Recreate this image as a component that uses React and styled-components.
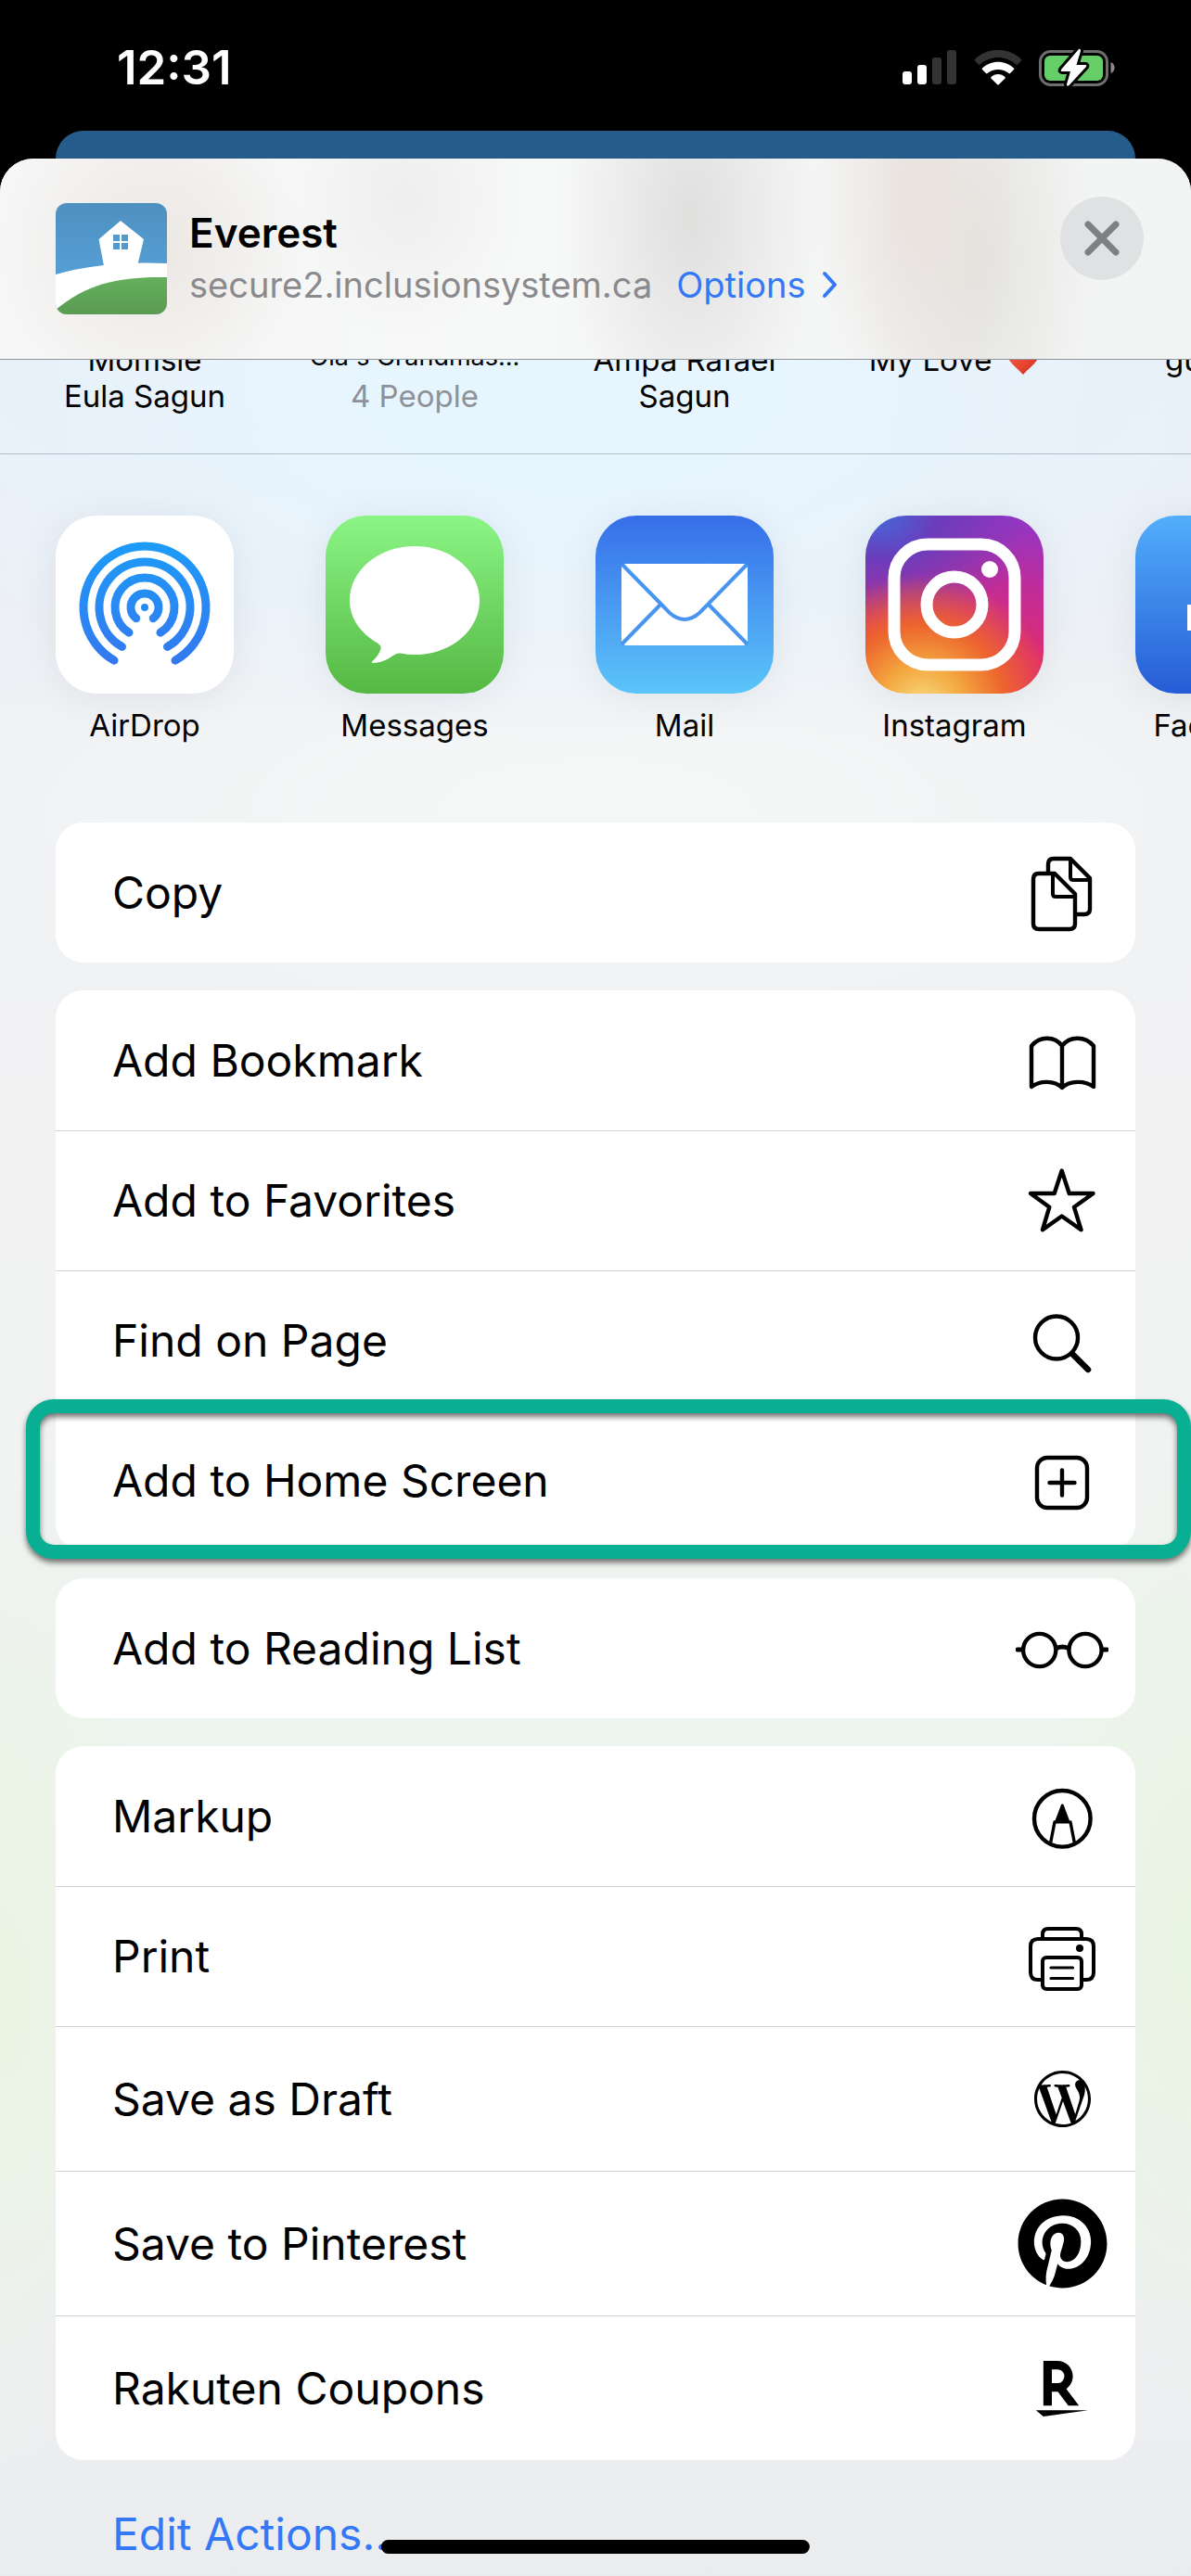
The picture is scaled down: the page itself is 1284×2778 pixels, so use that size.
import React from 'react'
import styled, { createGlobalStyle } from 'styled-components'
import { FaWordpressSimple, FaPinterest } from 'react-icons/fa'
import { SiRakuten } from 'react-icons/si'

const GlobalStyle = createGlobalStyle`
	* {
		box-sizing: border-box;
	}

	body {
		margin: 0;
		background: #000000;
		color: #000000;
		font-family: Inter, 'Liberation Sans', sans-serif;
	}

	button {
		padding: 0;
		border: 0;
		background: none;
		color: inherit;
		font: inherit;
		cursor: pointer;
	}

	ul {
		margin: 0;
		padding: 0;
		list-style: none;
	}

	svg {
		display: block;
		flex-shrink: 0;
	}
`

const Page = styled.div`
	position: relative;
	display: flex;
	flex-direction: column;
	min-height: 100vh;
	overflow: hidden;
`

const StatusBar = styled.div`
	display: flex;
	align-items: center;
	padding: 43px 82px 38px 126px;
	color: #ffffff;
`

const Time = styled.time`
	flex: 1;
	font-size: 51px;
	line-height: 60px;
	font-weight: 600;
`

const StatusIcons = styled.div`
	display: flex;
	align-items: center;
	gap: 18px;
`

const Backdrop = styled.div`
	height: 30px;
	margin: 0 60px;
	border-radius: 30px 30px 0 0;
	background: #265c8b;
`

const Sheet = styled.main`
	flex: 1;
	border-radius: 36px 36px 0 0;
	overflow: hidden;
	background: radial-gradient(ellipse 60% 16% at 48% 9%, #e7f5ff 30%, rgba(231, 245, 255, 0) 100%),
		radial-gradient(ellipse 60% 10% at 50% 27%, #f5f6f6 20%, rgba(245, 246, 246, 0) 100%),
		radial-gradient(ellipse 14% 20% at 0% 76%, #eaf4e2 0%, rgba(234, 244, 226, 0) 100%),
		radial-gradient(ellipse 14% 20% at 100% 74%, #e8f4e2 0%, rgba(232, 244, 226, 0) 100%),
		linear-gradient(
			180deg,
			#e8eef6 0%,
			#e9eff7 12%,
			#eff1f4 24%,
			#f2f2f3 42%,
			#eef4ef 65%,
			#eef3ee 78%,
			#eeeff2 90%,
			#ebecee 100%
		);
`

const Header = styled.header`
	display: flex;
	align-items: flex-start;
	gap: 24px;
	padding: 41px 51px 48px 60px;
	border-bottom: 1px solid #8e959b;
	background: radial-gradient(ellipse 13% 80% at 13% 45%, #ebe7e3 0%, rgba(235, 231, 227, 0) 100%),
		radial-gradient(ellipse 10% 70% at 34% 20%, #eeeeee 0%, rgba(238, 238, 238, 0) 100%),
		radial-gradient(ellipse 11% 120% at 58% 30%, #dfdfde 0%, rgba(223, 223, 222, 0) 100%),
		radial-gradient(ellipse 9% 110% at 77% 20%, #e9e2de 0%, rgba(233, 226, 222, 0) 100%),
		radial-gradient(ellipse 10% 130% at 82% 50%, #e3e2de 0%, rgba(227, 226, 222, 0) 100%),
		linear-gradient(90deg, #f6f6f6 0%, #f7f8f8 40%, #f2f4f3 100%);
`

const SiteIcon = styled.div`
	margin-top: 7px;
	border-radius: 12px;
	overflow: hidden;
`

const SiteInfo = styled.div`
	flex: 1;
	margin-top: 11px;
`

const SiteTitle = styled.h1`
	margin: 0;
	font-size: 44px;
	line-height: 56px;
	font-weight: 600;
`

const SiteLine = styled.div`
	display: flex;
	align-items: center;
	gap: 26px;
	font-size: 38px;
	line-height: 56px;
	color: #8a8a8e;
`

const OptionsButton = styled.button`
	display: flex;
	align-items: center;
	gap: 18px;
	color: #3478f6;
`

const CloseButton = styled.button`
	display: flex;
	align-items: center;
	justify-content: center;
	width: 90px;
	height: 90px;
	border-radius: 50%;
	background: #e0e1e3;
`

const Scroller = styled.ul`
	display: flex;
	gap: 99px;
	padding: 0 60px;
	overflow: hidden;
`

const Contacts = styled(Scroller)`
	height: 102px;
	border-bottom: 1px solid #b3bfc9;
`

const Contact = styled.li`
	flex: 0 0 192px;
	display: flex;
	flex-direction: column;
	align-items: ${props => (props.$cut ? 'flex-start' : 'center')};
	min-width: 0;
	margin-top: -19px;
	padding-left: ${props => (props.$cut ? '32px' : '0')};
	font-size: 33px;
	line-height: 39px;
	white-space: nowrap;
`

const ContactName = styled.span`
	display: flex;
	align-items: center;
	gap: 16px;
`

const GroupName = styled.span`
	margin-bottom: 7px;
	font-size: 27px;
	line-height: 32px;
`

const GroupSize = styled.span`
	color: #8e9298;
`

const Apps = styled(Scroller)`
	padding-top: 66px;
	padding-bottom: 85px;
`

const AppButton = styled.button`
	display: flex;
	flex-direction: column;
	align-items: center;
	gap: 15px;
	width: 192px;
	font-size: 33px;
	line-height: 39px;
`

const AppIcon = styled.span`
	width: 192px;
	height: 192px;
	border-radius: 44px;
	background: ${props => props.$background};
	box-shadow: 0 4px 44px rgba(0, 0, 0, 0.07);
`

const Actions = styled.div`
	display: flex;
	flex-direction: column;
	gap: 30px;
	padding: 0 60px;
`

const Card = styled.ul`
	border-radius: 30px;
	background: #ffffff;
`

const Row = styled.li`
	position: relative;
	height: ${props => (props.$tall ? '156px' : '151px')};

	& + & {
		border-top: 1px solid #d2d2d4;
	}
`

const RowButton = styled.button`
	display: flex;
	align-items: center;
	justify-content: space-between;
	width: 100%;
	height: 100%;
	padding: 0 29px 0 61px;
	font-size: 48px;
	line-height: 60px;
	text-align: left;
`

const IconBox = styled.span`
	display: flex;
	align-items: center;
	justify-content: center;
	width: 100px;
	height: 100px;
`

const Highlight = styled.div`
	position: absolute;
	top: -13px;
	right: -60px;
	bottom: -9px;
	left: -32px;
	z-index: 1;
	border: 15px solid #08af92;
	border-radius: 30px;
	filter: drop-shadow(0 4px 3px rgba(0, 0, 0, 0.55));
	pointer-events: none;
`

const EditButton = styled.button`
	margin: 50px 60px 15px 121px;
	font-size: 48px;
	line-height: 60px;
	color: #3478f6;
`

const HomeIndicator = styled.div`
	position: absolute;
	bottom: 24px;
	left: 50%;
	width: 36%;
	height: 15px;
	border-radius: 8px;
	background: #000000;
	transform: translateX(-50%);
`

const SignalIcon = () => (
	<svg width="59" height="38" viewBox="0 0 59 38" fill="#fff" aria-hidden="true">
		<rect x="0" y="23" width="10" height="14" rx="3" />
		<rect x="16" y="16" width="10" height="21" rx="3" />
		<rect x="32" y="8" width="10" height="29" rx="3" fill="#333" />
		<rect x="48" y="0" width="10" height="37" rx="3" fill="#333" />
	</svg>
)

const WifiIcon = () => (
	<svg width="52" height="38" viewBox="0 0 52 38" fill="#fff" aria-hidden="true">
		<path fill="#333" d="M1 10C15-3.500 37-3.500 51 10C51.500 10.500 51.500 11 51 11.500L47 15.500C46.500 16 46 16 45.500 15.500C34 5.500 18 5.500 6.500 15.500C6 16 5.500 16 5 15.500L1 11.500C.5 11 .5 10.500 1 10Z" />
		<path d="M9 19.500C18.500 10.500 33.500 10.500 43 19.500C43.500 20 43.500 20.500 43 21L39 25C38.500 25.500 38 25.500 37.500 25C31 19.500 21 19.500 14.500 25C14 25.500 13.500 25.500 13 25L9 21C8.500 20.500 8.500 20 9 19.500Z" />
		<path d="M18.500 29C22.500 25 29.500 25 33.500 29C34 29.500 34 30 33.500 30.500L27 37Q26 38 25 37L18.500 30.500C18 30 18 29.500 18.500 29Z" />
	</svg>
)

const BatteryIcon = () => (
	<svg width="82" height="42" viewBox="0 0 82 42" aria-hidden="true">
		<rect x="1.500" y="3.500" width="72" height="36" rx="11" fill="none" stroke="#6e6e70" strokeWidth="3" />
		<path d="M77.500 15C83 17 83 25 77.500 27Z" fill="#8a8a8c" />
		<rect x="6" y="8" width="63" height="27" rx="6" fill="#65ce67" />
		<path
			d="M43 1L24 23Q23 25 25 25H34L30 39Q30 42 32.500 40L51 20Q52 18 50 18H40.500L45 3Q45 0 43 1Z"
			fill="#fff"
			stroke="#000"
			strokeWidth="6"
			paintOrder="stroke"
		/>
	</svg>
)

const HouseIcon = () => (
	<svg width="120" height="120" viewBox="0 0 120 120" aria-hidden="true">
		<defs>
			<linearGradient id="sky" x1="0" y1="0" x2="0" y2="1">
				<stop offset="0" stopColor="#4f90bf" />
				<stop offset="0.65" stopColor="#559fd6" />
			</linearGradient>
			<linearGradient id="grass" x1="0" y1="0" x2="0" y2="1">
				<stop offset="0" stopColor="#65af5c" />
				<stop offset="1" stopColor="#5a9b52" />
			</linearGradient>
		</defs>
		<path d="M0 0H120V120H0Z" fill="url(#sky)" />
		<path d="M0 77Q52 62 120 65V120H0Z" fill="#fff" />
		<path d="M70 19L95 39L88 68H52L46.500 39Z" fill="#fff" />
		<path d="M62 34h7v7h-7zM71 34h7v7h-7zM62 43h7v7h-7zM71 43h7v7h-7z" fill="#529ace" />
		<path d="M0 115C35 86 70 79 120 80V120H0Z" fill="url(#grass)" />
	</svg>
)

const Chevron = () => (
	<svg width="17" height="30" viewBox="0 0 17 30" fill="none" stroke="#3478f6" strokeWidth="4" strokeLinecap="round" strokeLinejoin="round" aria-hidden="true">
		<path d="M3 3L14 15L3 27" />
	</svg>
)

const CloseIcon = () => (
	<svg width="40" height="40" viewBox="0 0 40 40" stroke="#7f8083" strokeWidth="7" strokeLinecap="round" aria-hidden="true">
		<path d="M5 5L35 35M35 5L5 35" />
	</svg>
)

const Heart = () => (
	<svg width="36" height="32" viewBox="0 0 36 32" aria-hidden="true">
		<defs>
			<linearGradient id="heart" x1="0" y1="0" x2="1" y2="1">
				<stop offset="0" stopColor="#f0604c" />
				<stop offset="0.6" stopColor="#e8442f" />
				<stop offset="1" stopColor="#b7281a" />
			</linearGradient>
		</defs>
		<path d="M18 31C10 22 1 17 1 9C1 3 5 0 10 0C14 0 17 2 18 5C19 2 22 0 26 0C31 0 35 3 35 9C35 17 26 22 18 31Z" fill="url(#heart)" />
	</svg>
)

// open ring around (96, 99) with a gap at the bottom, `gap` is the half angle
const ring = (r, gap) => {
	const a = (gap * Math.PI) / 180
	const dx = r * Math.sin(a)
	const y = 99 + r * Math.cos(a)
	return `M${96 - dx} ${y}A${r} ${r} 0 1 1 ${96 + dx} ${y}`
}

const AirDropIcon = () => (
	<svg width="192" height="192" viewBox="0 0 192 192" fill="none" stroke="url(#air)" strokeWidth="9" strokeLinecap="round" aria-hidden="true">
		<defs>
			<linearGradient id="air" gradientUnits="userSpaceOnUse" x1="0" y1="30" x2="0" y2="160">
				<stop offset="0" stopColor="#1d9bf7" />
				<stop offset="1" stopColor="#3478f0" />
			</linearGradient>
		</defs>
		<path d={ring(66, 30)} />
		<path d={ring(49, 30)} />
		<path d={ring(32, 32)} />
		<path d={ring(15, 38)} />
		<circle cx="96" cy="99" r="4" fill="url(#air)" stroke="none" />
	</svg>
)

const MessagesIcon = () => (
	<svg width="192" height="192" viewBox="0 0 192 192" fill="#fff" aria-hidden="true">
		<path d="M96 33C134.700 33 166 59 166 91.500S134.700 150 96 150C91 150 86 149.500 81 148.500C77 148 75 149.500 72 151.500C66 156 59 158.700 51 159C49.500 159 49.500 158 50.500 157C54 154 58 149 59.500 144C60 141 59 140 56 137.500C38 127 26 111 26 91.500C26 59 57.300 33 96 33Z" />
	</svg>
)

const MailIcon = () => (
	<svg width="192" height="192" viewBox="0 0 192 192" aria-hidden="true">
		<rect x="28" y="52" width="136" height="88" rx="5" fill="#fff" />
		<g fill="none" stroke="#4795ee" strokeWidth="4">
			<path d="M29 53L80 105Q96 119 112 105L163 53" />
			<path d="M70 96L28 139M122 96L164 139" />
		</g>
	</svg>
)

const InstagramIcon = () => (
	<svg width="192" height="192" viewBox="0 0 192 192" fill="none" stroke="#fff" strokeWidth="13" aria-hidden="true">
		<rect x="31" y="31" width="130" height="130" rx="36" />
		<circle cx="96" cy="96" r="30" />
		<circle cx="134" cy="58" r="9" fill="#fff" stroke="none" />
	</svg>
)

const FacebookIcon = () => (
	<svg width="192" height="192" viewBox="0 0 192 192" fill="#fff" aria-hidden="true">
		<path d="M80 192V124H56V96H80V76C80 52 94 39 116 39C126 39 136 41 136 41V65H124C112 65 108 72 108 80V96H135L131 124H108V192Z" />
	</svg>
)

const LineIcon = ({ children }) => (
	<svg width="100" height="100" viewBox="0 0 100 100" fill="none" stroke="#000" strokeWidth="4.400" strokeLinecap="round" strokeLinejoin="round" aria-hidden="true">
		{children}
	</svg>
)

const CopyIcon = () => (
	<LineIcon>
		<path d="M42 29H25Q19 29 19 35V83Q19 89 25 89H58Q64 89 64 83V51Z" />
		<path d="M40 29V51Q40 54 43 54H64" strokeWidth="4" />
		<path d="M35 27V19Q35 13 41 13H59L80 34V67Q80 73 74 73H65" />
		<path d="M59 13V33Q59 36 62 36H80" strokeWidth="4" />
	</LineIcon>
)

const BookIcon = () => (
	<LineIcon>
		<path d="M17 34C26 23 42 23 50 34C58 23 75 23 84 34V78C75 71 58 71 50 79C42 71 26 71 17 78ZM50 34V79" />
	</LineIcon>
)

const StarIcon = () => (
	<LineIcon>
		<path d="M49.700 17.500L57.700 42H83.500L63 56.800L70.500 81.200L49.700 66.500L29 81.200L36.300 56.800L16 42H41.700Z" />
	</LineIcon>
)

const SearchIcon = () => (
	<LineIcon>
		<circle cx="44" cy="46.500" r="23" />
		<path d="M61 64L78 81" strokeWidth="6.500" />
	</LineIcon>
)

const PlusIcon = () => (
	<LineIcon>
		<rect x="23" y="25" width="54" height="54" rx="11" />
		<path d="M36.500 52H63.500M50 38.500V65.500" />
	</LineIcon>
)

const GlassesIcon = () => (
	<LineIcon>
		<circle cx="25.700" cy="51.500" r="17.600" />
		<circle cx="75" cy="51.500" r="17.600" />
		<path d="M44 49.500Q50 46.500 57 49.500M2 51H7M94 51H98.500" strokeWidth="4.800" />
	</LineIcon>
)

const MarkupIcon = () => (
	<LineIcon>
		<circle cx="50.300" cy="52.300" r="30.300" />
		<path d="M42 56L37.700 78M59 56L63.300 78" strokeWidth="3.400" />
		<path d="M50.300 38L57 56H43.500Z" fill="#000" strokeWidth="3" />
	</LineIcon>
)

const PrinterIcon = () => (
	<LineIcon>
		<path d="M29 31V26Q29 20 35 20H65Q71 20 71 26V31M29 75H24Q16 75 16 67V39Q16 31 24 31H76Q84 31 84 39V67Q84 75 76 75H71" strokeWidth="4" />
		<rect x="29" y="51" width="42" height="34" rx="4" strokeWidth="4" />
		<path d="M38 62H61.500M38 73.500H61.500" strokeWidth="3.200" />
		<circle cx="69" cy="41" r="4" fill="#000" stroke="none" />
	</LineIcon>
)

const apps = [
	{ name: 'AirDrop', icon: AirDropIcon, background: '#ffffff' },
	{ name: 'Messages', icon: MessagesIcon, background: 'linear-gradient(#8bf585, #55b843)' },
	{ name: 'Mail', icon: MailIcon, background: 'linear-gradient(#366ee9, #5cc5f9)' },
	{
		name: 'Instagram',
		icon: InstagramIcon,
		background: `radial-gradient(ellipse 75% 75% at 32% 108%, #f9df85 0%, #f3a73f 32%, rgba(238, 104, 42, 0.95) 62%, rgba(228, 48, 100, 0) 100%),
			radial-gradient(ellipse 85% 65% at 8% 0%, #4568d9 0%, #6b3cbb 38%, rgba(160, 45, 150, 0) 100%),
			linear-gradient(190deg, #8f37ca 0%, #c32c96 38%, #df2d6d 70%)`
	},
	{ name: 'Facebook', icon: FacebookIcon, background: 'linear-gradient(#52aefb, #265cd6)' }
]

const groups = [
	[{ label: 'Copy', icon: <CopyIcon /> }],
	[
		{ label: 'Add Bookmark', icon: <BookIcon /> },
		{ label: 'Add to Favorites', icon: <StarIcon /> },
		{ label: 'Find on Page', icon: <SearchIcon /> },
		{ label: 'Add to Home Screen', icon: <PlusIcon />, highlighted: true }
	],
	[{ label: 'Add to Reading List', icon: <GlassesIcon /> }],
	[
		{ label: 'Markup', icon: <MarkupIcon /> },
		{ label: 'Print', icon: <PrinterIcon /> },
		{ label: 'Save as Draft', icon: <FaWordpressSimple size={63} />, tall: true },
		{ label: 'Save to Pinterest', icon: <FaPinterest size={99} />, tall: true },
		{ label: 'Rakuten Coupons', icon: <SiRakuten size={60} />, tall: true }
	]
]

const App = () => (
	<Page>
		<GlobalStyle />
		<StatusBar>
			<Time>12:31</Time>
			<StatusIcons>
				<SignalIcon />
				<WifiIcon />
				<BatteryIcon />
			</StatusIcons>
		</StatusBar>
		<Backdrop />
		<Sheet>
			<Header>
				<SiteIcon>
					<HouseIcon />
				</SiteIcon>
				<SiteInfo>
					<SiteTitle>Everest</SiteTitle>
					<SiteLine>
						<span>secure2.inclusionsystem.ca</span>
						<OptionsButton>
							Options
							<Chevron />
						</OptionsButton>
					</SiteLine>
				</SiteInfo>
				<CloseButton aria-label="Close">
					<CloseIcon />
				</CloseButton>
			</Header>
			<Contacts>
				<Contact>
					<span>Momsie</span>
					<span>Eula Sagun</span>
				</Contact>
				<Contact>
					<GroupName>Ola's Grandmas...</GroupName>
					<GroupSize>4 People</GroupSize>
				</Contact>
				<Contact>
					<span>Ampa Rafael</span>
					<span>Sagun</span>
				</Contact>
				<Contact>
					<ContactName>
						My Love
						<Heart />
					</ContactName>
				</Contact>
				<Contact $cut>
					<span>gu</span>
				</Contact>
			</Contacts>
			<Apps>
				{apps.map(app => (
					<li key={app.name}>
						<AppButton>
							<AppIcon $background={app.background}>
								<app.icon />
							</AppIcon>
							{app.name}
						</AppButton>
					</li>
				))}
			</Apps>
			<Actions>
				{groups.map(group => (
					<Card key={group[0].label}>
						{group.map(action => (
							<Row key={action.label} $tall={action.tall}>
								<RowButton>
									{action.label}
									<IconBox>{action.icon}</IconBox>
								</RowButton>
								{action.highlighted && <Highlight />}
							</Row>
						))}
					</Card>
				))}
			</Actions>
			<EditButton>Edit Actions...</EditButton>
		</Sheet>
		<HomeIndicator />
	</Page>
)

export default App
